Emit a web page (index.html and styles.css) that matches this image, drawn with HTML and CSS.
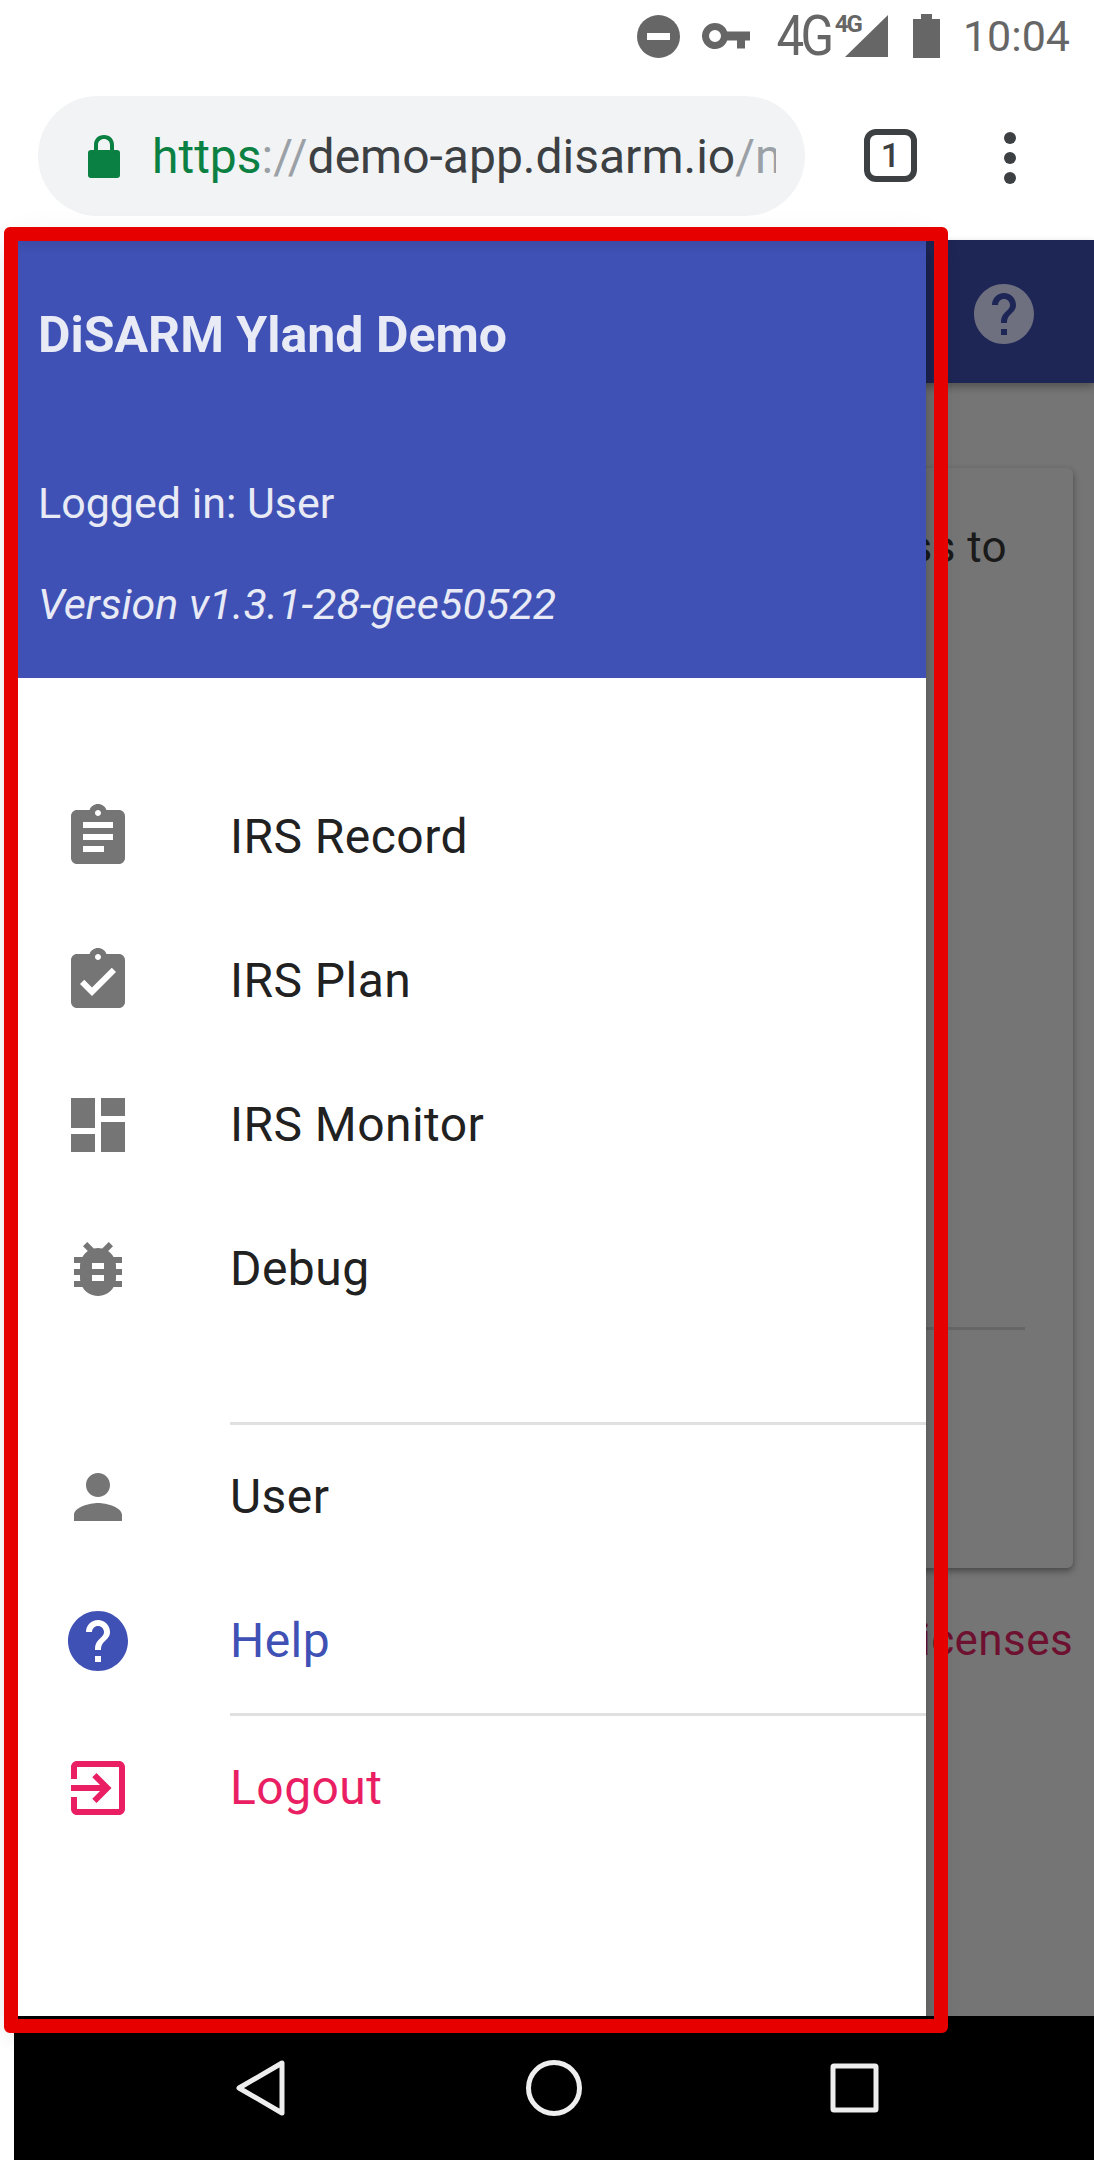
FILE: index.html
```html
<!DOCTYPE html>
<html lang="en">
<head>
    <meta charset="UTF-8">
    <title>DiSARM Yland Demo</title>
    <link rel="stylesheet" href="styles.css">
</head>
<body>
    <div class="status-bar">
        <svg class="ic-dnd" viewBox="0 0 43 43"><circle cx="21.5" cy="21.5" r="21.5"/><rect x="10" y="18" width="23" height="7" fill="#fff"/></svg>
        <svg class="ic-key" viewBox="0 0 48 26"><path fill-rule="evenodd" d="M13 0a13 13 0 0 1 12.2 8.5H48v9h-5v8h-8v-8H25.2A13 13 0 1 1 13 0zm0 7a6 6 0 1 0 0 12 6 6 0 0 0 0-12z"/></svg>
        <span class="net">4G</span>
        <span class="net-small">4G</span>
        <svg class="ic-signal" viewBox="0 0 43 42"><path d="M43 0v42H0z"/></svg>
        <svg class="ic-battery" viewBox="0 0 27 44"><path d="M8 0h11v5h8v39H0V5h8z"/></svg>
        <span class="clock">10:04</span>
    </div>

    <div class="chrome-bar">
        <div class="url-pill">
            <svg class="ic-lock" viewBox="0 0 32 43"><path fill-rule="evenodd" d="M16 0c6 0 10 4 10 10v5h3c2 0 3 1 3 3v22c0 2-1 3-3 3H3c-2 0-3-1-3-3V18c0-2 1-3 3-3h3v-5C6 4 10 0 16 0zm0 4c-3.500 0-6 2.500-6 6v5h12v-5c0-3.500-2.500-6-6-6z"/></svg>
            <div class="url"><span class="url-scheme">https</span><span class="url-sep">://</span>demo-app.disarm.io<span class="url-sep">/n</span></div>
        </div>
        <div class="tab-count">1</div>
        <div class="kebab"><i></i><i></i><i></i></div>
    </div>

    <div class="screen">
        <div class="app">
            <div class="app-bar">
                <svg class="ic-app-help" viewBox="2 2 20 20"><path d="M12 2C6.480 2 2 6.480 2 12s4.480 10 10 10 10-4.480 10-10S17.520 2 12 2zm1 17h-2v-2h2v2zm2.070-7.750l-.9.920C13.450 12.900 13 13.500 13 15h-2v-.5c0-1.100.45-2.100 1.170-2.830l1.240-1.260c.37-.36.59-.86.59-1.410 0-1.100-.9-2-2-2s-2 .9-2 2H8c0-2.210 1.790-4 4-4s4 1.790 4 4c0 .88-.36 1.680-.93 2.250z"/></svg>
            </div>
            <div class="content">
                <div class="card">
                    <p class="card-line">Welcome and access to</p>
                    <p class="card-line card-line-a">the application</p>
                    <p class="card-line card-line-b">the application</p>
                    <div class="card-rule"></div>
                </div>
                <div class="licenses">Licenses</div>
            </div>
        </div>
        <div class="nav-bar">
            <svg class="ic-back" viewBox="0 0 49 56"><path d="M46 3v50L3 28z"/></svg>
            <svg class="ic-home" viewBox="0 0 56 56"><circle cx="28" cy="28" r="25.500"/></svg>
            <svg class="ic-recent" viewBox="0 0 49 50"><rect x="3" y="3" width="43" height="44" rx="1"/></svg>
        </div>
    </div>

    <aside class="drawer">
        <header class="drawer-head">
            <div class="drawer-title">DiSARM Yland Demo</div>
            <div class="drawer-user">Logged in: User</div>
            <div class="drawer-version">Version v1.3.1-28-gee50522</div>
        </header>
        <nav class="drawer-list">
            <a class="row">
                <svg class="row-icon" viewBox="0 0 24 24"><path d="M19 3h-4.180C14.400 1.840 13.300 1 12 1c-1.300 0-2.400.84-2.820 2H5c-1.100 0-2 .9-2 2v14c0 1.100.9 2 2 2h14c1.100 0 2-.9 2-2V5c0-1.100-.9-2-2-2zm-7 0c.55 0 1 .45 1 1s-.45 1-1 1-1-.45-1-1 .45-1 1-1zm2 14H7v-2h7v2zm3-4H7v-2h10v2zm0-4H7V7h10v2z"/></svg>
                <span>IRS Record</span>
            </a>
            <a class="row">
                <svg class="row-icon" viewBox="0 0 24 24"><path d="M19 3h-4.180C14.400 1.840 13.300 1 12 1c-1.300 0-2.400.84-2.820 2H5c-1.100 0-2 .9-2 2v14c0 1.100.9 2 2 2h14c1.100 0 2-.9 2-2V5c0-1.100-.9-2-2-2zm-7 0c.55 0 1 .45 1 1s-.45 1-1 1-1-.45-1-1 .45-1 1-1zm-2 14l-4-4 1.410-1.410L10 14.170l6.590-6.590L18 9l-8 8z"/></svg>
                <span>IRS Plan</span>
            </a>
            <a class="row">
                <svg class="row-icon" viewBox="0 0 24 24"><path d="M3 13h8V3H3v10zm0 8h8v-6H3v6zm10 0h8V11h-8v10zm0-18v6h8V3h-8z"/></svg>
                <span>IRS Monitor</span>
            </a>
            <a class="row">
                <svg class="row-icon" viewBox="0 0 24 24"><path d="M20 8h-2.810c-.45-.78-1.070-1.450-1.820-1.960L17 4.410 15.590 3l-2.170 2.170C12.960 5.060 12.490 5 12 5c-.49 0-.96.06-1.410.17L8.410 3 7 4.410l1.620 1.630C7.880 6.550 7.260 7.220 6.810 8H4v2h2.090c-.05.33-.09.66-.09 1v1H4v2h2v1c0 .34.04.67.09 1H4v2h2.810c1.040 1.790 2.970 3 5.190 3s4.150-1.210 5.190-3H20v-2h-2.090c.05-.33.09-.66.09-1v-1h2v-2h-2v-1c0-.34-.04-.67-.09-1H20V8zm-6 8h-4v-2h4v2zm0-4h-4v-2h4v2z"/></svg>
                <span>Debug</span>
            </a>
            <div class="divider divider-first"></div>
            <a class="row">
                <svg class="row-icon" viewBox="0 0 24 24"><path d="M12 12c2.210 0 4-1.790 4-4s-1.790-4-4-4-4 1.790-4 4 1.790 4 4 4zm0 2c-2.670 0-8 1.340-8 4v2h16v-2c0-2.660-5.330-4-8-4z"/></svg>
                <span>User</span>
            </a>
            <a class="row row-help">
                <svg class="row-icon" viewBox="0 0 24 24"><path d="M12 2C6.480 2 2 6.480 2 12s4.480 10 10 10 10-4.480 10-10S17.520 2 12 2zm1 17h-2v-2h2v2zm2.070-7.750l-.9.920C13.450 12.900 13 13.500 13 15h-2v-.5c0-1.100.45-2.100 1.170-2.830l1.240-1.260c.37-.36.59-.86.59-1.410 0-1.100-.9-2-2-2s-2 .9-2 2H8c0-2.210 1.790-4 4-4s4 1.790 4 4c0 .88-.36 1.680-.93 2.250z"/></svg>
                <span>Help</span>
            </a>
            <div class="divider"></div>
            <a class="row row-logout">
                <svg class="row-icon" viewBox="0 0 24 24"><path d="M10.090 15.590L11.500 17l5-5-5-5-1.410 1.410L12.670 11H3v2h9.670l-2.580 2.590zM19 3H5c-1.110 0-2 .9-2 2v4h2V5h14v14H5v-4H3v4c0 1.100.89 2 2 2h14c1.100 0 2-.9 2-2V5c0-1.100-.9-2-2-2z"/></svg>
                <span>Logout</span>
            </a>
        </nav>
    </aside>

    <div class="highlight"></div>
</body>
</html>
```

FILE: styles.css
```css
* {box-sizing: border-box;}

body {
    margin: 0;
    width: 1094px;
    height: 2160px;
    position: relative;
    overflow: hidden;
    background: #fff;
    font-family: Roboto, "Liberation Sans", sans-serif;
    color: #212121;
}

/* phone status bar */
.status-bar {
    height: 96px;
    padding: 0 24px 24px 0;
    display: flex;
    align-items: center;
    justify-content: flex-end;
    color: #666;
    fill: #666;
}
.ic-dnd {width: 43px; height: 43px; margin-right: 22px;}
.ic-key {width: 48px; height: 26px; margin-right: 19px;}
.net {font-size: 56px; letter-spacing: -4px; line-height: 56px; margin-right: 4px; transform: scaleX(.88); transform-origin: right;}
.net-small {font-size: 24px; font-weight: 700; letter-spacing: -2px; line-height: 24px; align-self: flex-start; margin: 12px -16px 0 0; position: relative; z-index: 1;}
.ic-signal {width: 43px; height: 42px; margin-right: 25px;}
.ic-battery {width: 27px; height: 44px; margin-right: 23px;}
.clock {font-size: 43px; line-height: 44px;}

/* browser toolbar */
.chrome-bar {
    height: 144px;
    display: flex;
    align-items: flex-start;
}
.url-pill {
    width: 767px;
    height: 120px;
    margin-left: 38px;
    padding-left: 50px;
    display: flex;
    align-items: center;
    background: #f1f3f4;
    border-radius: 60px;
}
.ic-lock {width: 32px; height: 43px; fill: #0b8043; margin-right: 32px;}
.url {
    width: 624px;
    overflow: hidden;
    white-space: nowrap;
    font-size: 48px;
    color: #3c4043;
}
.url-scheme {color: #0b8043;}
.url-sep {color: #9aa0a6;}
.tab-count {
    width: 53px;
    height: 53px;
    margin: 33px 0 0 59px;
    border: 6px solid #3c4043;
    border-radius: 12px;
    font-size: 34px;
    font-weight: 500;
    line-height: 41px;
    text-align: center;
    color: #3c4043;
}
.kebab {
    margin: 36px 0 0 87px;
    display: flex;
    flex-direction: column;
    gap: 8px;
}
.kebab i {width: 12px; height: 12px; border-radius: 50%; background: #3c4043;}

/* app behind the drawer */
.screen {margin-left: 14px;}
.app {height: 1776px; display: flex; flex-direction: column;}
.app-bar {
    height: 143px;
    flex: none;
    display: flex;
    align-items: center;
    justify-content: flex-end;
    padding: 4px 60px 0 0;
    background: #1e2656;
    box-shadow: 0 4px 8px rgba(0, 0, 0, .3);
    position: relative;
}
.ic-app-help {width: 60px; height: 60px; fill: #6e7080;}
.content {flex: 1; background: #757575; padding: 85px 21px 0 24px; overflow: hidden;}
.card {
    height: 1100px;
    padding: 49px 66px 0 0;
    background: #757575;
    border-radius: 6px;
    box-shadow: 0 3px 7px rgba(0, 0, 0, .4);
}
.card-line {margin: 0; font-size: 44px; letter-spacing: .4px; line-height: 60px; color: #1a1a1a; text-align: right; white-space: nowrap;}
.card-line-a {margin: 180px 79px 0 0;}
.card-line-b {margin: 5px 79px 0 0;}
.card-rule {height: 3px; margin: 445px -18px 0 0; background: #666;}
.licenses {margin-top: 42px; font-size: 44px; letter-spacing: .4px; line-height: 60px; color: #6e1030; text-align: right;}
.nav-bar {
    height: 144px;
    padding-top: 44px;
    background: #000;
    display: flex;
    align-items: flex-start;
    fill: none;
    stroke: #eee;
    stroke-width: 5px;
    stroke-linejoin: round;
}
.ic-back {width: 49px; height: 56px; margin-left: 222px;}
.ic-home {width: 56px; height: 56px; margin-left: 241px;}
.ic-recent {width: 49px; height: 50px; margin: 3px 0 0 248px;}

/* navigation drawer */
.drawer {
    position: absolute;
    left: 18px;
    top: 240px;
    width: 908px;
    height: 1776px;
    background: #fff;
    box-shadow: 0 8px 10px -5px rgba(0, 0, 0, .2), 0 16px 24px 2px rgba(0, 0, 0, .14), 0 6px 30px 5px rgba(0, 0, 0, .12);
}
.drawer-head {
    height: 438px;
    padding: 66px 0 0 20px;
    background: linear-gradient(#3a4aa6, #3f51b5 14px);
    color: #e8eaf6;
    font-size: 43px;
}
.drawer-title {font-size: 50px; font-weight: 700; line-height: 58px;}
.drawer-user {margin-top: 110px; line-height: 58px;}
.drawer-version {margin-top: 43px; line-height: 58px; font-style: italic;}
.drawer-list {padding-top: 87px;}
.row {
    height: 144px;
    padding-left: 44px;
    display: flex;
    align-items: center;
    font-size: 48px;
    letter-spacing: .45px;
}
.row span {margin-bottom: 2px;}
.row-icon {width: 72px; height: 72px; margin-right: 96px; fill: #757575;}
.row-help {color: #3f51b5;}
.row-help .row-icon {fill: #3f51b5;}
.row-logout {color: #e91e63;}
.row-logout .row-icon {fill: #e91e63;}
.divider {height: 3px; margin-left: 212px; background: #e0e0e0;}
.divider-first {margin-top: 81px;}

/* red marker drawn over the screenshot */
.highlight {
    position: absolute;
    left: 4px;
    top: 227px;
    width: 944px;
    height: 1806px;
    border: 14px solid #e60000;
    border-radius: 6px;
}
```
